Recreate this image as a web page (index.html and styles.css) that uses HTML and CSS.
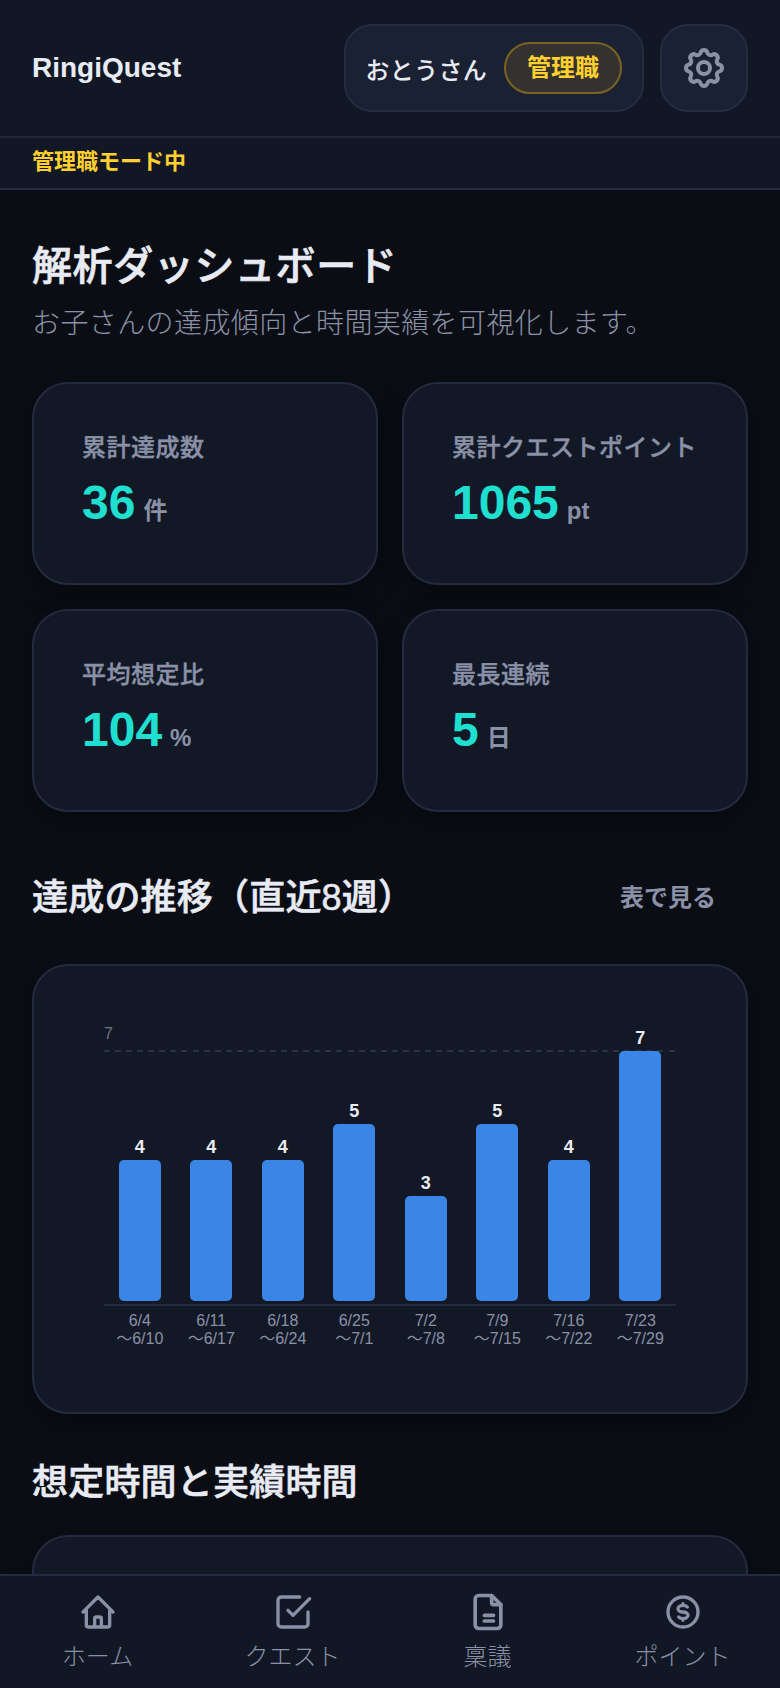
FILE: index.html
```html
<!DOCTYPE html>
<html lang="ja">
<head>
    <meta charset="UTF-8">
    <meta name="viewport" content="width=device-width, initial-scale=1.0">
    <title>RingiQuest</title>
    <link rel="stylesheet" href="styles.css">
</head>
<body>

    <!-- Header -->
    <header class="app-header">
        <div class="brand">RingiQuest</div>
        <div class="header-actions">
            <div class="user-chip">
                <span class="user-name">おとうさん</span>
                <span class="role-badge">管理職</span>
            </div>
            <button class="settings-button" aria-label="設定">
                <svg class="settings-icon" viewBox="0 0 24 24" fill="none" stroke="currentColor" stroke-width="2" stroke-linecap="round" stroke-linejoin="round">
                    <path d="M10.325 4.317c.426-1.756 2.924-1.756 3.35 0a1.724 1.724 0 002.573 1.066c1.543-.94 3.31.826 2.37 2.37a1.724 1.724 0 001.065 2.572c1.756.426 1.756 2.924 0 3.35a1.724 1.724 0 00-1.066 2.573c.94 1.543-.826 3.31-2.37 2.37a1.724 1.724 0 00-2.572 1.065c-.426 1.756-2.924 1.756-3.35 0a1.724 1.724 0 00-2.573-1.066c-1.543.94-3.31-.826-2.37-2.37a1.724 1.724 0 00-1.065-2.572c-1.756-.426-1.756-2.924 0-3.35a1.724 1.724 0 001.066-2.573c-.94-1.543.826-3.31 2.37-2.37.996.608 2.296.07 2.572-1.065z"/>
                    <path d="M15 12a3 3 0 11-6 0 3 3 0 016 0z"/>
                </svg>
            </button>
        </div>
    </header>
    <div class="mode-bar">管理職モード中</div>

    <main class="content">
        <h1 class="page-title">解析ダッシュボード</h1>
        <p class="page-sub">お子さんの達成傾向と時間実績を可視化します。</p>

        <!-- Summary cards -->
        <section class="stat-grid">
            <div class="card stat-card">
                <div class="stat-label">累計達成数</div>
                <div class="stat-value">36<span class="stat-unit">件</span></div>
            </div>
            <div class="card stat-card">
                <div class="stat-label">累計クエストポイント</div>
                <div class="stat-value">1065<span class="stat-unit">pt</span></div>
            </div>
            <div class="card stat-card">
                <div class="stat-label">平均想定比</div>
                <div class="stat-value">104<span class="stat-unit">%</span></div>
            </div>
            <div class="card stat-card">
                <div class="stat-label">最長連続</div>
                <div class="stat-value">5<span class="stat-unit">日</span></div>
            </div>
        </section>

        <!-- Weekly chart -->
        <div class="section-head section-head-action">
            <h2 class="section-title">達成の推移（直近8週）</h2>
            <button class="link-button">表で見る</button>
        </div>
        <section class="card chart-card">
            <div class="plot">
                <span class="axis-max">7</span>
                <div class="grid-line"></div>
                <div class="bars">
                    <div class="bar-col"><span class="bar-value">4</span><div class="bar" style="height: 141px"></div></div>
                    <div class="bar-col"><span class="bar-value">4</span><div class="bar" style="height: 141px"></div></div>
                    <div class="bar-col"><span class="bar-value">4</span><div class="bar" style="height: 141px"></div></div>
                    <div class="bar-col"><span class="bar-value">5</span><div class="bar" style="height: 177px"></div></div>
                    <div class="bar-col"><span class="bar-value">3</span><div class="bar" style="height: 105px"></div></div>
                    <div class="bar-col"><span class="bar-value">5</span><div class="bar" style="height: 177px"></div></div>
                    <div class="bar-col"><span class="bar-value">4</span><div class="bar" style="height: 141px"></div></div>
                    <div class="bar-col"><span class="bar-value">7</span><div class="bar" style="height: 250px"></div></div>
                </div>
            </div>
            <div class="week-labels">
                <div>6/4<br>〜6/10</div>
                <div>6/11<br>〜6/17</div>
                <div>6/18<br>〜6/24</div>
                <div>6/25<br>〜7/1</div>
                <div>7/2<br>〜7/8</div>
                <div>7/9<br>〜7/15</div>
                <div>7/16<br>〜7/22</div>
                <div>7/23<br>〜7/29</div>
            </div>
        </section>

        <div class="section-head">
            <h2 class="section-title">想定時間と実績時間</h2>
        </div>
        <section class="card time-card"></section>
    </main>

    <!-- Bottom navigation -->
    <nav class="bottom-nav">
        <a class="nav-item">
            <svg class="nav-icon" viewBox="0 0 24 24" fill="none" stroke="currentColor" stroke-width="2" stroke-linecap="round" stroke-linejoin="round">
                <path d="M3 12l2-2m0 0l7-7 7 7M5 10v10a1 1 0 001 1h3m10-11l2 2m-2-2v10a1 1 0 01-1 1h-3m-6 0a1 1 0 001-1v-4a1 1 0 011-1h2a1 1 0 011 1v4a1 1 0 001 1m-6 0h6"/>
            </svg>
            <span>ホーム</span>
        </a>
        <a class="nav-item">
            <svg class="nav-icon" viewBox="0 0 24 24" fill="none" stroke="currentColor" stroke-width="2" stroke-linecap="round" stroke-linejoin="round">
                <path d="M9 11l3 3L22 4"/>
                <path d="M21 12v7a2 2 0 0 1-2 2H5a2 2 0 0 1-2-2V5a2 2 0 0 1 2-2h11"/>
            </svg>
            <span>クエスト</span>
        </a>
        <a class="nav-item">
            <svg class="nav-icon nav-icon-doc" viewBox="0 0 24 24" fill="none" stroke="currentColor" stroke-width="2" stroke-linecap="round" stroke-linejoin="round">
                <path d="M14 3H7a2 2 0 0 0-2 2v14a2 2 0 0 0 2 2h10a2 2 0 0 0 2-2V8z"/>
                <path d="M14 3v4a1 1 0 0 0 1 1h4"/>
                <path d="M10 13.8h5M10 16.9h5"/>
            </svg>
            <span>稟議</span>
        </a>
        <a class="nav-item">
            <svg class="nav-icon" viewBox="0 0 24 24" fill="none" stroke="currentColor" stroke-width="2" stroke-linecap="round" stroke-linejoin="round">
                <path d="M14.6 9c-.5-.6-1.5-1-2.6-1-1.66 0-3 .9-3 2s1.34 2 3 2 3 .9 3 2-1.34 2-3 2c-1.1 0-2.1-.4-2.6-1M12 8V7m0 9v1"/>
                <circle cx="12" cy="12" r="9"/>
            </svg>
            <span>ポイント</span>
        </a>
    </nav>

</body>
</html>
```

FILE: styles.css
```css
* {
    box-sizing: border-box;
}

body {
    font-family: "Liberation Sans", "Noto Sans CJK JP", sans-serif;
    background-color: #0a0d14;
    color: #e8ebf4;
    margin: 0;
    height: 100vh;
    display: flex;
    flex-direction: column;
    overflow: hidden;
}

button {
    font-family: inherit;
    cursor: pointer;
}

/* Header */
.app-header {
    display: flex;
    align-items: center;
    justify-content: space-between;
    padding: 24px 32px;
    background-color: #111725;
    border-bottom: 2px solid #1f2638;
}

.brand {
    font-size: 28px;
    font-weight: 700;
}

.header-actions {
    display: flex;
    gap: 16px;
}

.user-chip {
    display: flex;
    align-items: center;
    gap: 17px;
    height: 88px;
    padding: 0 20px;
    background-color: #1a2133;
    border: 2px solid #252d42;
    border-radius: 28px;
}

.user-name {
    font-size: 24px;
    font-weight: 500;
    letter-spacing: 0.3px;
}

.role-badge {
    padding: 7px 21px;
    font-size: 24px;
    line-height: 34px;
    font-weight: 700;
    color: #ffd02e;
    background-color: #343230;
    border: 2px solid #7a6420;
    border-radius: 999px;
}

.settings-button {
    display: flex;
    align-items: center;
    justify-content: center;
    width: 88px;
    height: 88px;
    padding: 0;
    color: #8a91a6;
    background-color: #1a2133;
    border: 2px solid #252d42;
    border-radius: 28px;
}

.settings-icon {
    width: 48px;
    height: 48px;
}

.mode-bar {
    padding: 0 32px;
    height: 52px;
    line-height: 48px;
    font-size: 22px;
    font-weight: 700;
    color: #ffd02e;
    background-color: #111725;
    border-bottom: 2px solid #252d42;
}

/* Main */
.content {
    flex: 1;
    min-height: 0;
    overflow: hidden;
    padding: 48px 32px 0;
}

.page-title {
    margin: 0;
    font-size: 40px;
    line-height: 56px;
    font-weight: 500;
    letter-spacing: 0.6px;
    -webkit-text-stroke: 0.7px currentColor;
}

.page-sub {
    margin: 10px 0 38px;
    font-size: 28px;
    line-height: 40px;
    font-weight: 300;
    letter-spacing: 0.4px;
    color: #8a91a6;
}

.card {
    background-color: #121826;
    border: 2px solid #232b40;
    border-radius: 36px;
    box-shadow: 0 8px 24px rgba(0, 0, 0, 0.35);
}

.stat-grid {
    display: grid;
    grid-template-columns: 1fr 1fr;
    gap: 24px;
}

.stat-card {
    padding: 48px;
}

.stat-label {
    font-size: 24px;
    line-height: 32px;
    font-weight: 500;
    letter-spacing: 0.5px;
    -webkit-text-stroke: 0.4px currentColor;
    color: #8a91a6;
    white-space: nowrap;
}

.stat-value {
    display: flex;
    align-items: baseline;
    gap: 8px;
    height: 63px;
    margin-top: 8px;
    font-size: 48px;
    line-height: 61px;
    font-weight: 700;
    color: #1fe0d0;
}

.stat-unit {
    font-size: 24px;
    line-height: 32px;
    font-weight: 700;
    color: #8a91a6;
}

/* Sections */
.section-head {
    display: flex;
    align-items: center;
    justify-content: space-between;
    margin: 42px 0 25px;
}

.section-head-action {
    margin-bottom: 22px;
}

.section-title {
    margin: 0;
    font-size: 36px;
    line-height: 54px;
    font-weight: 500;
    letter-spacing: 0.2px;
    -webkit-text-stroke: 0.6px currentColor;
}

.link-button {
    padding: 28px 32px;
    font-size: 24px;
    line-height: 32px;
    font-weight: 700;
    color: #8a91a6;
    background: none;
    border: none;
}

/* Chart */
.chart-card {
    padding: 51px 70px 64px;
}

.plot {
    position: relative;
    padding-bottom: 3px;
    border-bottom: 2px solid #232b40;
}

.axis-max {
    position: absolute;
    top: 8px;
    left: 0;
    font-size: 16px;
    line-height: 18px;
    color: #6f7689;
}

.grid-line {
    position: absolute;
    top: 33px;
    left: 0;
    right: 0;
    height: 2px;
    background: repeating-linear-gradient(to right, #2a3246 0, #2a3246 6px, transparent 6px, transparent 11.07px);
}

.bars {
    position: relative;
    display: grid;
    grid-template-columns: repeat(8, 1fr);
    align-items: end;
    height: 284px;
}

.bar-col {
    display: flex;
    flex-direction: column;
    align-items: center;
}

.bar-value {
    margin-bottom: 3px;
    font-size: 18px;
    line-height: 20px;
    font-weight: 700;
    color: #e8ebf4;
}

.bar {
    width: 42px;
    background-color: #3a86e6;
    border-radius: 5px;
}

.week-labels {
    display: grid;
    grid-template-columns: repeat(8, 1fr);
    margin-top: 6px;
    font-size: 16px;
    line-height: 18px;
    text-align: center;
    color: #8a91a6;
    white-space: nowrap;
}

.time-card {
    height: 300px;
}

/* Bottom nav */
.bottom-nav {
    display: grid;
    grid-template-columns: repeat(4, 1fr);
    height: 114px;
    padding-top: 16px;
    background-color: #111725;
    border-top: 2px solid #232b40;
}

.nav-item {
    display: flex;
    flex-direction: column;
    align-items: center;
    gap: 8px;
    font-size: 24px;
    line-height: 34px;
    font-weight: 300;
    color: #8a91a6;
}

.nav-icon {
    width: 40px;
    height: 40px;
}

.nav-icon-doc {
    width: 44px;
    height: 44px;
    margin: -2px 0;
}
```
